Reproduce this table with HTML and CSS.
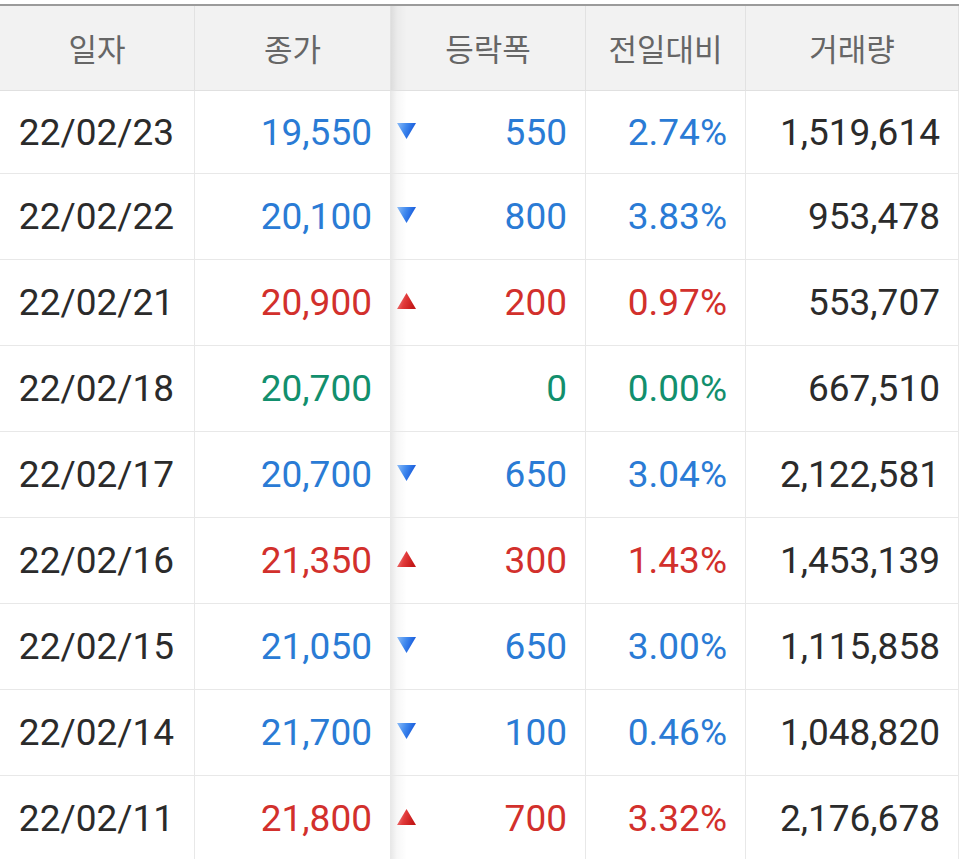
FILE: index.html
```html
<!DOCTYPE html>
<html lang="ko">
<head>
<meta charset="utf-8">
<link rel="stylesheet" href="styles.css">
</head>
<body>
<svg class="defs" width="0" height="0" aria-hidden="true">
  <defs>
    <linearGradient id="gdown" x1="0" y1="0" x2="1" y2="0.3">
      <stop offset="0" stop-color="#8cbcf7"/>
      <stop offset="0.5" stop-color="#3f88ee"/>
      <stop offset="1" stop-color="#1456d8"/>
    </linearGradient>
    <linearGradient id="gup" x1="0" y1="0" x2="1" y2="0.3">
      <stop offset="0" stop-color="#f39a9a"/>
      <stop offset="0.5" stop-color="#e23b3b"/>
      <stop offset="1" stop-color="#c41818"/>
    </linearGradient>
  </defs>
</svg>
<div class="grid">
  <div class="cell head c1">일자</div>
  <div class="cell head c2">종가</div>
  <div class="cell head c3 shade">등락폭</div>
  <div class="cell head c4">전일대비</div>
  <div class="cell head c5">거래량</div>

  <div class="cell c1">22/02/23</div>
  <div class="cell c2 num blue">19,550</div>
  <div class="cell c3 num blue shade"><svg class="tri" viewBox="0 0 18 15"><path d="M0 0H18L9 15Z" fill="url(#gdown)"/></svg><span>550</span></div>
  <div class="cell c4 num blue">2.74%</div>
  <div class="cell c5 num">1,519,614</div>

  <div class="cell c1">22/02/22</div>
  <div class="cell c2 num blue">20,100</div>
  <div class="cell c3 num blue shade"><svg class="tri" viewBox="0 0 18 15"><path d="M0 0H18L9 15Z" fill="url(#gdown)"/></svg><span>800</span></div>
  <div class="cell c4 num blue">3.83%</div>
  <div class="cell c5 num">953,478</div>

  <div class="cell c1">22/02/21</div>
  <div class="cell c2 num red">20,900</div>
  <div class="cell c3 num red shade"><svg class="tri" viewBox="0 0 18 15"><path d="M9 0L18 15H0Z" fill="url(#gup)"/></svg><span>200</span></div>
  <div class="cell c4 num red">0.97%</div>
  <div class="cell c5 num">553,707</div>

  <div class="cell c1">22/02/18</div>
  <div class="cell c2 num green">20,700</div>
  <div class="cell c3 num green shade"><span class="none"></span><span>0</span></div>
  <div class="cell c4 num green">0.00%</div>
  <div class="cell c5 num">667,510</div>

  <div class="cell c1">22/02/17</div>
  <div class="cell c2 num blue">20,700</div>
  <div class="cell c3 num blue shade"><svg class="tri" viewBox="0 0 18 15"><path d="M0 0H18L9 15Z" fill="url(#gdown)"/></svg><span>650</span></div>
  <div class="cell c4 num blue">3.04%</div>
  <div class="cell c5 num">2,122,581</div>

  <div class="cell c1">22/02/16</div>
  <div class="cell c2 num red">21,350</div>
  <div class="cell c3 num red shade"><svg class="tri" viewBox="0 0 18 15"><path d="M9 0L18 15H0Z" fill="url(#gup)"/></svg><span>300</span></div>
  <div class="cell c4 num red">1.43%</div>
  <div class="cell c5 num">1,453,139</div>

  <div class="cell c1">22/02/15</div>
  <div class="cell c2 num blue">21,050</div>
  <div class="cell c3 num blue shade"><svg class="tri" viewBox="0 0 18 15"><path d="M0 0H18L9 15Z" fill="url(#gdown)"/></svg><span>650</span></div>
  <div class="cell c4 num blue">3.00%</div>
  <div class="cell c5 num">1,115,858</div>

  <div class="cell c1">22/02/14</div>
  <div class="cell c2 num blue">21,700</div>
  <div class="cell c3 num blue shade"><svg class="tri" viewBox="0 0 18 15"><path d="M0 0H18L9 15Z" fill="url(#gdown)"/></svg><span>100</span></div>
  <div class="cell c4 num blue">0.46%</div>
  <div class="cell c5 num">1,048,820</div>

  <div class="cell c1">22/02/11</div>
  <div class="cell c2 num red">21,800</div>
  <div class="cell c3 num red shade"><svg class="tri" viewBox="0 0 18 15"><path d="M9 0L18 15H0Z" fill="url(#gup)"/></svg><span>700</span></div>
  <div class="cell c4 num red">3.32%</div>
  <div class="cell c5 num">2,176,678</div>
</div>
</body>
</html>
```
FILE: styles.css
```css
html, body {
  margin: 0;
  padding: 0;
  background: #ffffff;
}
body {
  padding-top: 4px;
  font-family: Roboto, "Noto Sans CJK KR", sans-serif;
  color: #2b2b2b;
  overflow: hidden;
}
.defs {
  position: absolute;
  width: 0;
  height: 0;
}
.grid {
  display: grid;
  grid-template-columns: 195px 196px 195px 160px 213px;
  grid-template-rows: 85px 83px repeat(8, 86px);
  width: 959px;
  border-top: 2px solid #9b9b9b;
}
.cell {
  box-sizing: border-box;
  display: flex;
  align-items: center;
  border-right: 1px solid #e8e8e8;
  border-bottom: 1px solid #e8e8e8;
  font-size: 37px;
  white-space: nowrap;
}
.head {
  background: #f2f2f2;
  justify-content: center;
  font-family: "Noto Sans CJK KR", sans-serif;
  font-size: 31px;
  color: #666666;
  border-bottom-color: #e0e0e0;
  border-right-color: #e2e2e2;
  padding-bottom: 2px;
}
.c1 {
  justify-content: center;
}
.c1:not(.head) {
  padding-right: 1px;
}
.num {
  justify-content: flex-end;
  padding-right: 18px;
}
.c3.num {
  justify-content: space-between;
  padding-left: 6px;
}
.shade {
  background-image: linear-gradient(to right, rgba(0, 0, 0, 0.09), rgba(0, 0, 0, 0.03) 6px, rgba(0, 0, 0, 0) 16px);
}
.head.shade {
  background-color: #f2f2f2;
}
.tri {
  width: 19px;
  height: 16px;
  margin-top: -3px;
}
.none {
  width: 19px;
}
.blue { color: #2a7bd5; }
.red { color: #d2302c; }
.green { color: #128f6d; }
```
